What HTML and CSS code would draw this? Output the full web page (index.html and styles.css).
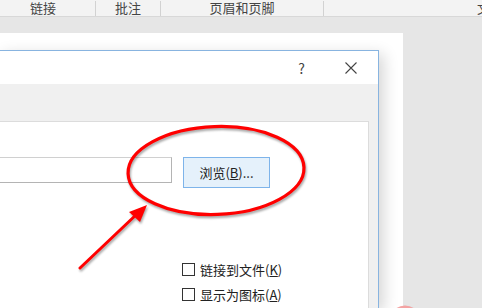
FILE: index.html
```html
<!DOCTYPE html>
<html lang="zh-CN">
<head>
    <meta charset="UTF-8">
    <title>插入对象</title>
    <link rel="stylesheet" href="styles.css">
</head>
<body>
    <!-- Ribbon tabs -->
    <div class="ribbon">
        <div class="tab tab-link">链接</div>
        <div class="tab tab-note">批注</div>
        <div class="tab tab-header">页眉和页脚</div>
        <div class="tab tab-last">文</div>
    </div>

    <div class="workspace">
        <div class="page">
            <!-- Dialog -->
            <div class="dialog">
                <div class="titlebar">
                    <span class="help">?</span>
                    <svg class="close" width="12" height="12" viewBox="0 0 12 12">
                        <path d="M0.5 0.5 L11.5 11.5 M11.5 0.5 L0.5 11.5" stroke="#444" stroke-width="1.1" fill="none"/>
                    </svg>
                </div>
                <div class="band"></div>
                <div class="panel">
                    <div class="file-row">
                        <div class="file-input"></div>
                        <button class="browse">浏览(<u>B</u>)...</button>
                    </div>
                    <div class="options">
                        <label class="option"><span class="check"></span>链接到文件(<u>K</u>)</label>
                        <label class="option"><span class="check"></span>显示为图标(<u>A</u>)</label>
                    </div>
                </div>
            </div>
        </div>
    </div>

    <!-- Red annotation drawn over the screenshot -->
    <svg class="marks" width="482" height="308" viewBox="0 0 482 308">
        <ellipse cx="216" cy="170.5" rx="88" ry="44" fill="none" stroke="#f00" stroke-width="3.2" transform="rotate(-2 216 170)"/>
        <line x1="80" y1="268" x2="138" y2="213" stroke="#f00" stroke-width="3" stroke-linecap="round"/>
        <polygon points="147,205 129,212 140,222" fill="#f00"/>
        <circle cx="405" cy="321" r="14" fill="none" stroke="#f4a3a3" stroke-width="3"/>
    </svg>
</body>
</html>
```

FILE: styles.css
```css
body {
    margin: 0;
    width: 482px;
    height: 308px;
    overflow: hidden;
    position: relative;
    background-color: #e6e6e6;
    font-family: "Noto Sans CJK SC", "Noto Sans", sans-serif;
    color: #222;
}

.ribbon {
    display: flex;
    height: 15px;
    padding-top: 1px;
    background-color: #f3f3f3;
    border-bottom: 1px solid #d8d8d8;
    font-family: "Liberation Sans", "Noto Sans CJK SC", sans-serif;
    font-size: 13px;
    line-height: 15px;
    color: #444;
}

.tab {
    height: 15px;
    text-align: center;
    border-right: 1px solid #d2d2d2;
}

.tab-link {
    width: 86px;
    padding-right: 9px;
}

.tab-note {
    width: 64px;
}

.tab-header {
    width: 162px;
}

.tab-last {
    flex: 1;
    text-align: left;
    padding-left: 153px;
    border-right: none;
    white-space: nowrap;
    overflow: hidden;
}

.workspace {
    padding-top: 16px;
}

.page {
    width: 403px;
    height: 275px;
    padding-top: 17px;
    box-sizing: border-box;
    background-color: #fff;
}

.dialog {
    width: 381px;
    height: 258px;
    margin-left: -2px;
    box-sizing: border-box;
    border: 1px solid #88b4e0;
    border-bottom: none;
    background-color: #f0f0f0;
    box-shadow: 5px 4px 14px rgba(0, 0, 0, 0.16);
}

.titlebar {
    display: flex;
    align-items: center;
    justify-content: flex-end;
    height: 33px;
    padding-right: 21px;
    background-color: #fff;
}

.help {
    font-size: 14px;
    line-height: 14px;
    color: #444;
    margin-right: 40px;
}

.close {
    display: block;
}

.band {
    height: 37px;
}

.panel {
    height: 187px;
    margin-right: 9px;
    padding-top: 35px;
    box-sizing: border-box;
    background-color: #fff;
    border-top: 1px solid #dcdcdc;
    border-right: 1px solid #dcdcdc;
}

.file-row {
    display: flex;
    align-items: flex-start;
}

.file-input {
    width: 173px;
    height: 26px;
    box-sizing: border-box;
    border: 1px solid #b4b4b4;
    border-top-color: #d0d0d0;
}

.browse {
    width: 87px;
    height: 31px;
    margin-left: 11px;
    padding: 0;
    background-color: #e5f1fb;
    border: 1px solid #7eb4ea;
    font-family: inherit;
    font-size: 13px;
    color: #222;
}

.options {
    padding-left: 183px;
    margin-top: 69px;
}

.option {
    display: flex;
    align-items: center;
    height: 25px;
    font-size: 13px;
    color: #222;
}

.check {
    width: 13px;
    height: 13px;
    box-sizing: border-box;
    border: 1px solid #333;
    background-color: #fff;
    margin-right: 5px;
}

.marks {
    position: absolute;
    left: 0;
    top: 0;
    pointer-events: none;
    filter: drop-shadow(1px 2px 1px rgba(0, 0, 0, 0.35));
}
```
